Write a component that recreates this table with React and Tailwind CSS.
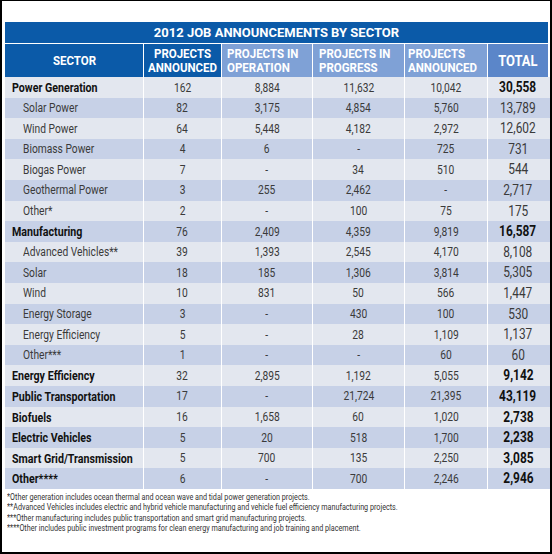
const ROWS = [
  { name: 'Power Generation', main: true, v: ['162', '8,884', '11,632', '10,042', '30,558'] },
  { name: 'Solar Power', v: ['82', '3,175', '4,854', '5,760', '13,789'] },
  { name: 'Wind Power', v: ['64', '5,448', '4,182', '2,972', '12,602'] },
  { name: 'Biomass Power', v: ['4', '6', '-', '725', '731'] },
  { name: 'Biogas Power', v: ['7', '-', '34', '510', '544'] },
  { name: 'Geothermal Power', v: ['3', '255', '2,462', '-', '2,717'] },
  { name: 'Other*', v: ['2', '-', '100', '75', '175'] },
  { name: 'Manufacturing', main: true, v: ['76', '2,409', '4,359', '9,819', '16,587'] },
  { name: 'Advanced Vehicles**', v: ['39', '1,393', '2,545', '4,170', '8,108'] },
  { name: 'Solar', v: ['18', '185', '1,306', '3,814', '5,305'] },
  { name: 'Wind', v: ['10', '831', '50', '566', '1,447'] },
  { name: 'Energy Storage', v: ['3', '-', '430', '100', '530'] },
  { name: 'Energy Efficiency', v: ['5', '-', '28', '1,109', '1,137'] },
  { name: 'Other***', v: ['1', '-', '-', '60', '60'] },
  { name: 'Energy Efficiency', main: true, v: ['32', '2,895', '1,192', '5,055', '9,142'] },
  { name: 'Public Transportation', main: true, v: ['17', '-', '21,724', '21,395', '43,119'] },
  { name: 'Biofuels', main: true, v: ['16', '1,658', '60', '1,020', '2,738'] },
  { name: 'Electric Vehicles', main: true, v: ['5', '20', '518', '1,700', '2,238'] },
  { name: 'Smart Grid/Transmission', main: true, v: ['5', '700', '135', '2,250', '3,085'] },
  { name: 'Other****', main: true, v: ['6', '-', '700', '2,246', '2,946'] },
];

const NOTES = [
  '*Other generation includes ocean thermal and ocean wave and tidal power generation projects.',
  '**Advanced Vehicles includes electric and hybrid vehicle manufacturing and vehicle fuel efficiency manufacturing projects.',
  '***Other manufacturing includes public transportation and smart grid manufacturing projects.',
  '****Other includes public investment programs for clean energy manufacturing and job training and placement.',
];

const COLS = 'grid grid-cols-[139px_78px_91px_92px_83px_60px]';

// condensed look: Roboto squeezed horizontally
function Narrow({ children, className = 'scale-x-[0.82]' }) {
  return <span className={`inline-block whitespace-nowrap ${className}`}>{children}</span>;
}

export default function App() {
  return (
    <div
      className="w-[552px] h-[554px] bg-white border-2 border-t border-black box-border overflow-hidden"
      style={{ fontFamily: 'Roboto, "Liberation Sans", sans-serif' }}
    >
      <div className="pl-[3px] pt-[21px]">
        {/* title */}
        <div className="w-[543px] h-[22px] bg-[#0b5aa8] text-white font-bold text-[13px] flex items-center justify-center border-b border-white">
          2012 JOB ANNOUNCEMENTS BY SECTOR
        </div>

        {/* header */}
        <div className={`${COLS} h-[33px] text-white font-bold text-[12.5px] leading-[14px] uppercase`}>
          <div className="bg-[#0b5aa8] flex items-center justify-center border-r border-white">
            <Narrow className="scale-x-[0.92]">Sector</Narrow>
          </div>
          <div className="bg-[#0b5aa8] flex items-center justify-center text-center border-r border-white">
            <Narrow className="scale-x-[0.92]">Projects<br />Announced</Narrow>
          </div>
          <div className="bg-[#7fa1d6] flex items-center pl-[5px] border-r border-white">
            <Narrow className="scale-x-[0.92] origin-left">Projects in<br />Operation</Narrow>
          </div>
          <div className="bg-[#7fa1d6] flex items-center pl-[6px] border-r border-white">
            <Narrow className="scale-x-[0.92] origin-left">Projects in<br />Progress</Narrow>
          </div>
          <div className="bg-[#7fa1d6] flex items-center pl-[3px] border-r border-white">
            <Narrow className="scale-x-[0.92] origin-left">Projects<br />Announced</Narrow>
          </div>
          <div className="bg-[#5b86c9] flex items-center justify-center text-[15px]">
            <Narrow className="scale-x-[0.86]">Total</Narrow>
          </div>
        </div>

        {/* body */}
        {ROWS.map((r, i) => (
          <div
            key={i}
            className={`${COLS} h-[20.6px] text-[12.5px] text-[#3a3a3a] ${i % 2 === 0 ? 'bg-[#e3e7ef]' : 'bg-[#c7d1e7]'}`}
          >
            <div
              className={`flex items-center border-r border-white ${r.main ? 'pl-[7px] font-bold text-[13px] text-[#111]' : 'pl-[18px]'}`}
            >
              <Narrow className="scale-x-[0.82] origin-left">{r.name}</Narrow>
            </div>
            {r.v.slice(0, 4).map((x, j) => (
              <div key={j} className="flex items-center justify-center border-r border-white">
                <Narrow>{x}</Narrow>
              </div>
            ))}
            <div className={`flex items-center justify-center text-[14.5px] ${r.main ? 'font-bold text-[#111]' : ''}`}>
              <Narrow>{r.v[4]}</Narrow>
            </div>
          </div>
        ))}

        {/* notes */}
        <div className="pt-[3px] pl-[2px] text-[9px] leading-[10.5px] text-[#333]">
          {NOTES.map((n, i) => (
            <div key={i}>
              <span className="inline-block whitespace-nowrap origin-left scale-x-[0.8]">{n}</span>
            </div>
          ))}
        </div>
      </div>
    </div>
  );
}
